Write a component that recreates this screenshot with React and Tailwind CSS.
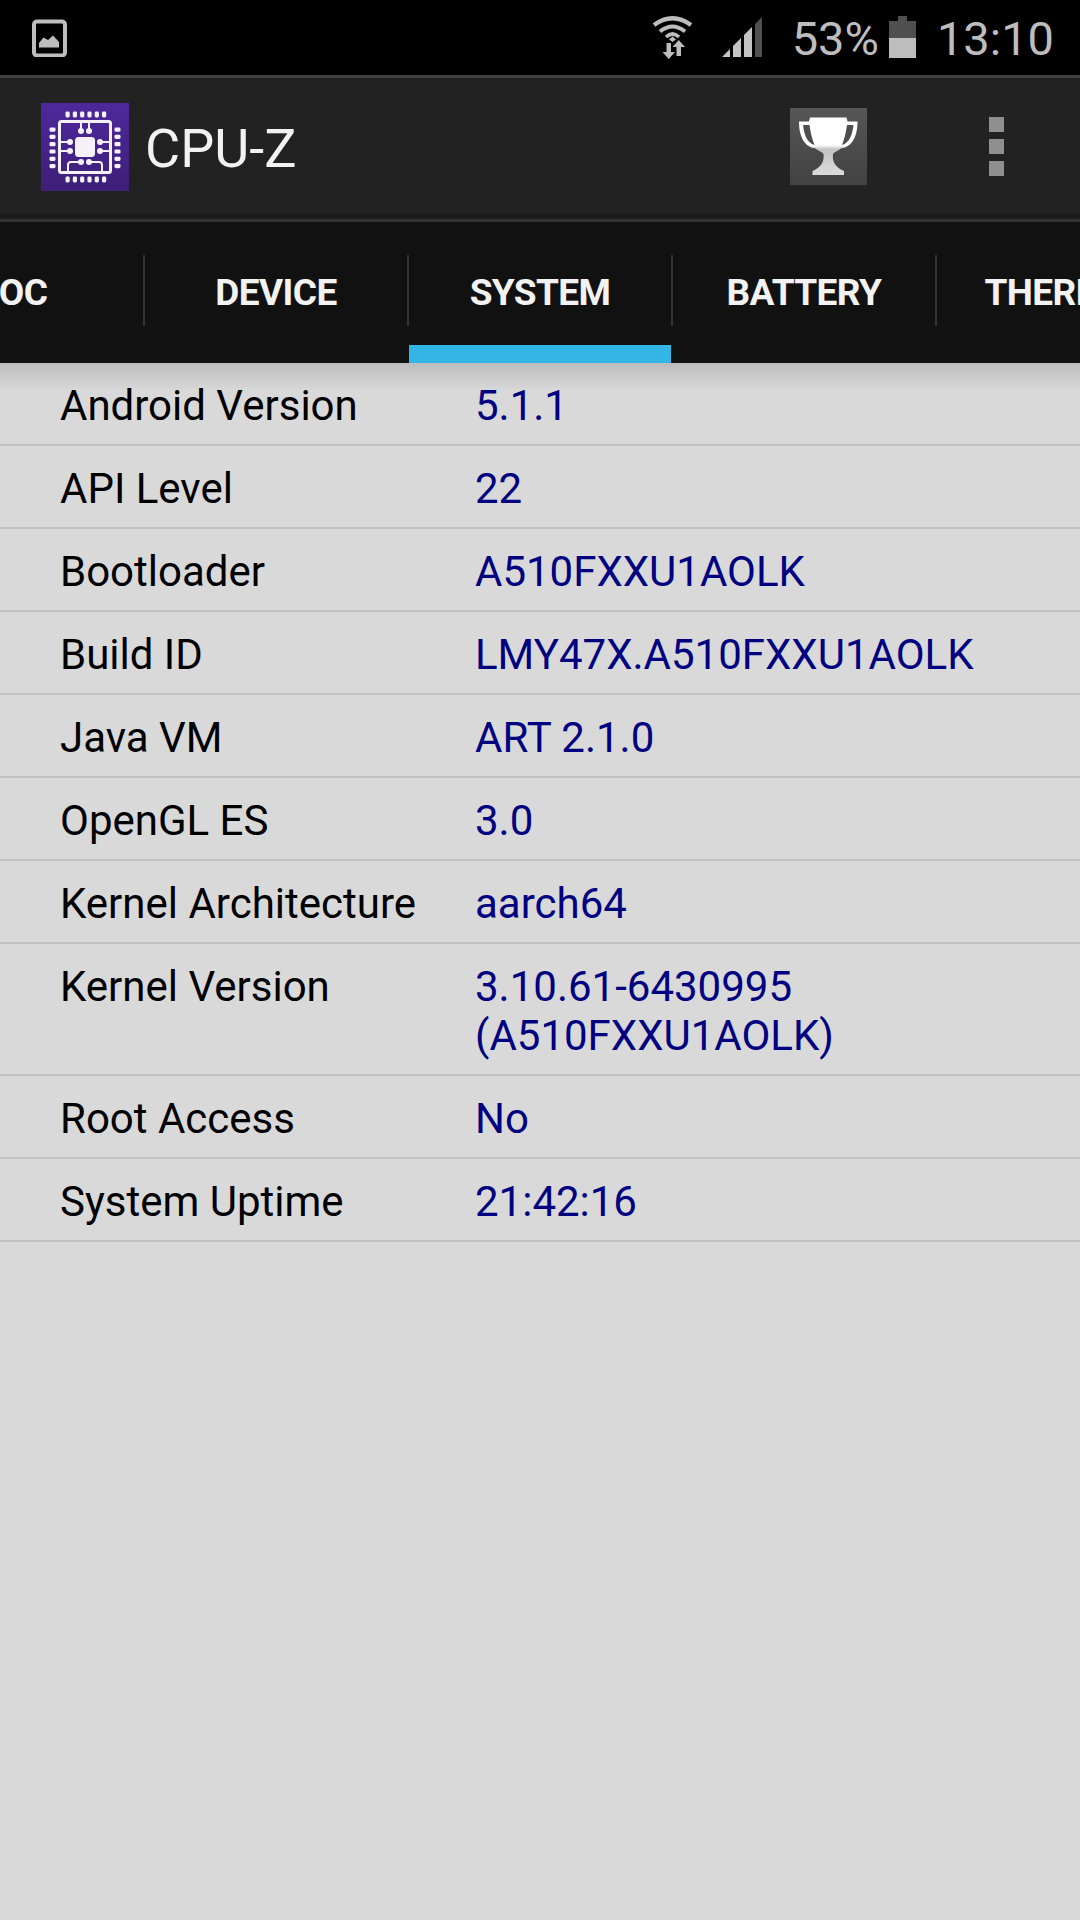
import React from "react";

const rows = [
  ["Android Version", ["5.1.1"]],
  ["API Level", ["22"]],
  ["Bootloader", ["A510FXXU1AOLK"]],
  ["Build ID", ["LMY47X.A510FXXU1AOLK"]],
  ["Java VM", ["ART 2.1.0"]],
  ["OpenGL ES", ["3.0"]],
  ["Kernel Architecture", ["aarch64"]],
  ["Kernel Version", ["3.10.61-6430995", "(A510FXXU1AOLK)"]],
  ["Root Access", ["No"]],
  ["System Uptime", ["21:42:16"]],
];

const tabs = ["SOC", "DEVICE", "SYSTEM", "BATTERY", "THERMAL"];

function PictureIcon() {
  return (
    <svg width="36" height="38" viewBox="0 0 36 38" className="block">
      <rect x="3" y="2.500" width="31" height="34" rx="3" fill="none" stroke="#bdbdbd" strokeWidth="4" />
      <path d="M8 28.500 V24 L12.500 18.500 L17 21 L22 16.500 L28 23 V28.500 Z" fill="#bdbdbd" />
    </svg>
  );
}

function WifiIcon() {
  return (
    <svg width="42" height="44" viewBox="0 0 42 44" className="block">
      <path d="M2 9 Q20.500 -4.500 39 9" fill="none" stroke="#bdbdbd" strokeWidth="4.200" />
      <path d="M8 15.500 Q20.500 5.500 33 15.500" fill="none" stroke="#bdbdbd" strokeWidth="4" />
      <path d="M14 21 Q20.500 15 27 21" fill="none" stroke="#bdbdbd" strokeWidth="3.600" />
      <path d="M17 23.500 L20.500 20.500 L24 23.500 L20.500 26 Z" fill="#bdbdbd" />
      <path d="M14.500 27 H19 V36 H23 L16.750 43 L10.500 36 H14.500 Z" fill="#bdbdbd" />
      <path d="M24.500 40 V31 H20.500 L26.750 24 L33 31 H29 V40 Z" fill="#bdbdbd" />
    </svg>
  );
}

function SignalIcon() {
  return (
    <svg width="40" height="40" viewBox="0 0 40 40" className="block">
      <path d="M0 40 L8 32 V40 Z" fill="#c4c4c4" />
      <path d="M11 29 L19 21 V40 H11 Z" fill="#c4c4c4" />
      <path d="M22 18 L30 10 V40 H22 Z" fill="#c4c4c4" />
      <path d="M33 7 L40 0 V40 H33 Z" fill="#4f4f4f" />
    </svg>
  );
}

function BatteryIcon() {
  return (
    <svg width="27" height="42" viewBox="0 0 27 42" className="block">
      <rect x="9" y="0" width="9" height="6" fill="#4f4f4f" />
      <rect x="0" y="5" width="27" height="17" fill="#4f4f4f" />
      <rect x="0" y="22" width="27" height="20" fill="#bdbdbd" />
    </svg>
  );
}

function ChipLogo() {
  const w = "#f4f2f8";
  const pins = [0, 1, 2, 3, 4, 5];
  return (
    <svg width="88" height="88" viewBox="0 0 88 88" className="block">
      <defs>
        <linearGradient id="lg" x1="0" y1="0" x2="0" y2="1">
          <stop offset="0" stopColor="#4e289b" />
          <stop offset="1" stopColor="#3d1f78" />
        </linearGradient>
      </defs>
      <rect width="88" height="88" fill="url(#lg)" />
      {pins.map((i) => (
        <g key={i} fill={w}>
          <rect x={24.5 + i * 7.3} y="8.500" width="4.200" height="6" rx="1.400" />
          <rect x={24.5 + i * 7.3} y="73.500" width="4.200" height="6" rx="1.400" />
          <rect x="8.500" y={24.5 + i * 7.3} width="6" height="4.200" rx="1.400" />
          <rect x="73.500" y={24.5 + i * 7.3} width="6" height="4.200" rx="1.400" />
        </g>
      ))}
      <rect x="18.500" y="18.500" width="51" height="51" rx="2" fill="none" stroke={w} strokeWidth="3" />
      <rect x="34" y="34" width="20" height="20" rx="3.500" fill={w} />
      <g fill="none" stroke={w} strokeWidth="2">
        <path d="M40 19 V28 M48 19 V28" />
        <path d="M19 39 H28 M19 48 H28 M60 39 H69 M60 48 H69" />
        <path d="M27 69 V62 Q27 59 30 59 H40 M48 59 H58 Q61 59 61 62 V69" />
      </g>
      <g fill={w}>
        <circle cx="40" cy="28" r="3" />
        <circle cx="48" cy="28" r="3" />
        <circle cx="29" cy="39" r="3" />
        <circle cx="29" cy="48" r="3" />
        <circle cx="59" cy="39" r="3" />
        <circle cx="59" cy="48" r="3" />
        <circle cx="40" cy="59" r="3" />
        <circle cx="48" cy="59" r="3" />
      </g>
    </svg>
  );
}

function TrophyIcon() {
  return (
    <svg width="59" height="59" viewBox="0 0 59 59" className="block">
      <defs>
        <linearGradient id="tg" x1="0" y1="0" x2="0" y2="1">
          <stop offset="0" stopColor="#ffffff" />
          <stop offset="0.48" stopColor="#ffffff" />
          <stop offset="0.55" stopColor="#c4c4c4" />
          <stop offset="1" stopColor="#dadada" />
        </linearGradient>
      </defs>
      <path
        d="M10 4.500 L11 0.500 H47.500 L48.500 4.500 H58.500 C58.500 18 54 30 42 31.500 C39 34 35 35 34 37 C33 44 36 50 45 54 V58 H13.500 V54 C22.500 50 25.500 44 24.500 37 C23.500 35 19.500 34 16.500 31.500 C4.500 30 0 18 0 4.500 Z"
        fill="url(#tg)"
      />
      <path d="M4 8 H10.500 C11.500 15 13 22 15.500 28 C8 26 5 17 4 8 Z" fill="#4e4e4e" />
      <path d="M54.500 8 H48 C47 15 45.500 22 43 28 C50.500 26 53.500 17 54.500 8 Z" fill="#4e4e4e" />
    </svg>
  );
}

export default function App() {
  return (
    <div className="relative w-[1080px] h-[1920px] overflow-hidden flex flex-col bg-[#d9d9d9] font-['Roboto',sans-serif]">
      <div className="h-[75px] bg-black flex items-center pl-[31px] pr-[26px] text-[#bdbdbd]">
        <PictureIcon />
        <div className="ml-auto"><WifiIcon /></div>
        <div className="ml-[28px] mt-[-1px]"><SignalIcon /></div>
        <span className="ml-[30px] mt-[2px] text-[47px] leading-none font-normal">53%</span>
        <div className="ml-[10px] mt-[-1px]"><BatteryIcon /></div>
        <span className="ml-[21px] mt-[2px] text-[47px] leading-none font-normal">13:10</span>
      </div>
      <div className="h-[3px] bg-[#404040]" />
      <div className="h-[135px] pt-[2px] bg-[#222222] flex items-center pl-[41px]">
        <ChipLogo />
        <span className="ml-[16px] mt-[4px] text-[54px] leading-none font-normal text-[#f2f2f2]">CPU-Z</span>
        <div className="ml-auto mr-[213px] w-[77px] h-[77px] bg-gradient-to-b from-[#565656] to-[#424242] flex items-center justify-center">
          <TrophyIcon />
        </div>
      </div>
      <div className="h-[6px] bg-[#1d1d1d]" />
      <div className="h-[3px] bg-[#333333]" />
      <div className="relative h-[141px] bg-[#111111] flex overflow-hidden">
        <div className="flex ml-[-120px] shrink-0">
          {tabs.map((t, i) => (
            <div key={t} className="relative w-[264px] h-[141px] shrink-0 flex justify-center pt-[51px]">
              <span className="text-[37px] leading-[40px] font-bold text-[#f2f2f2] tracking-[-0.6px]">{t}</span>
              {i > 0 && <div className="absolute left-[-1px] top-[33px] h-[71px] w-[2px] bg-[#333333]" />}
              {t === "SYSTEM" && <div className="absolute left-[1px] right-[1px] bottom-0 h-[18px] bg-[#33b5e5]" />}
            </div>
          ))}
        </div>
      </div>
      <div className="relative flex-1">
        <div className="absolute top-0 left-0 right-0 h-[28px] bg-gradient-to-b from-[#bcbcbc] to-transparent" />
        {rows.map(([label, value]) => (
          <div key={label} className="relative flex border-b-[2px] border-[#c2c2c2] pl-[60px] pt-[18px] pb-[14px] text-[42px] leading-[49px]">
            <div className="w-[415px] text-black">{label}</div>
            <div className="text-[#000080]">
              {value.map((v) => (<div key={v}>{v}</div>))}
            </div>
          </div>
        ))}
      </div>
      <div className="absolute left-[989px] top-[117px] flex flex-col gap-[7px]">
        <div className="w-[15px] h-[15px] bg-[#8f8f8f]" />
        <div className="w-[15px] h-[15px] bg-[#8f8f8f]" />
        <div className="w-[15px] h-[15px] bg-[#8f8f8f]" />
      </div>
    </div>
  );
}
